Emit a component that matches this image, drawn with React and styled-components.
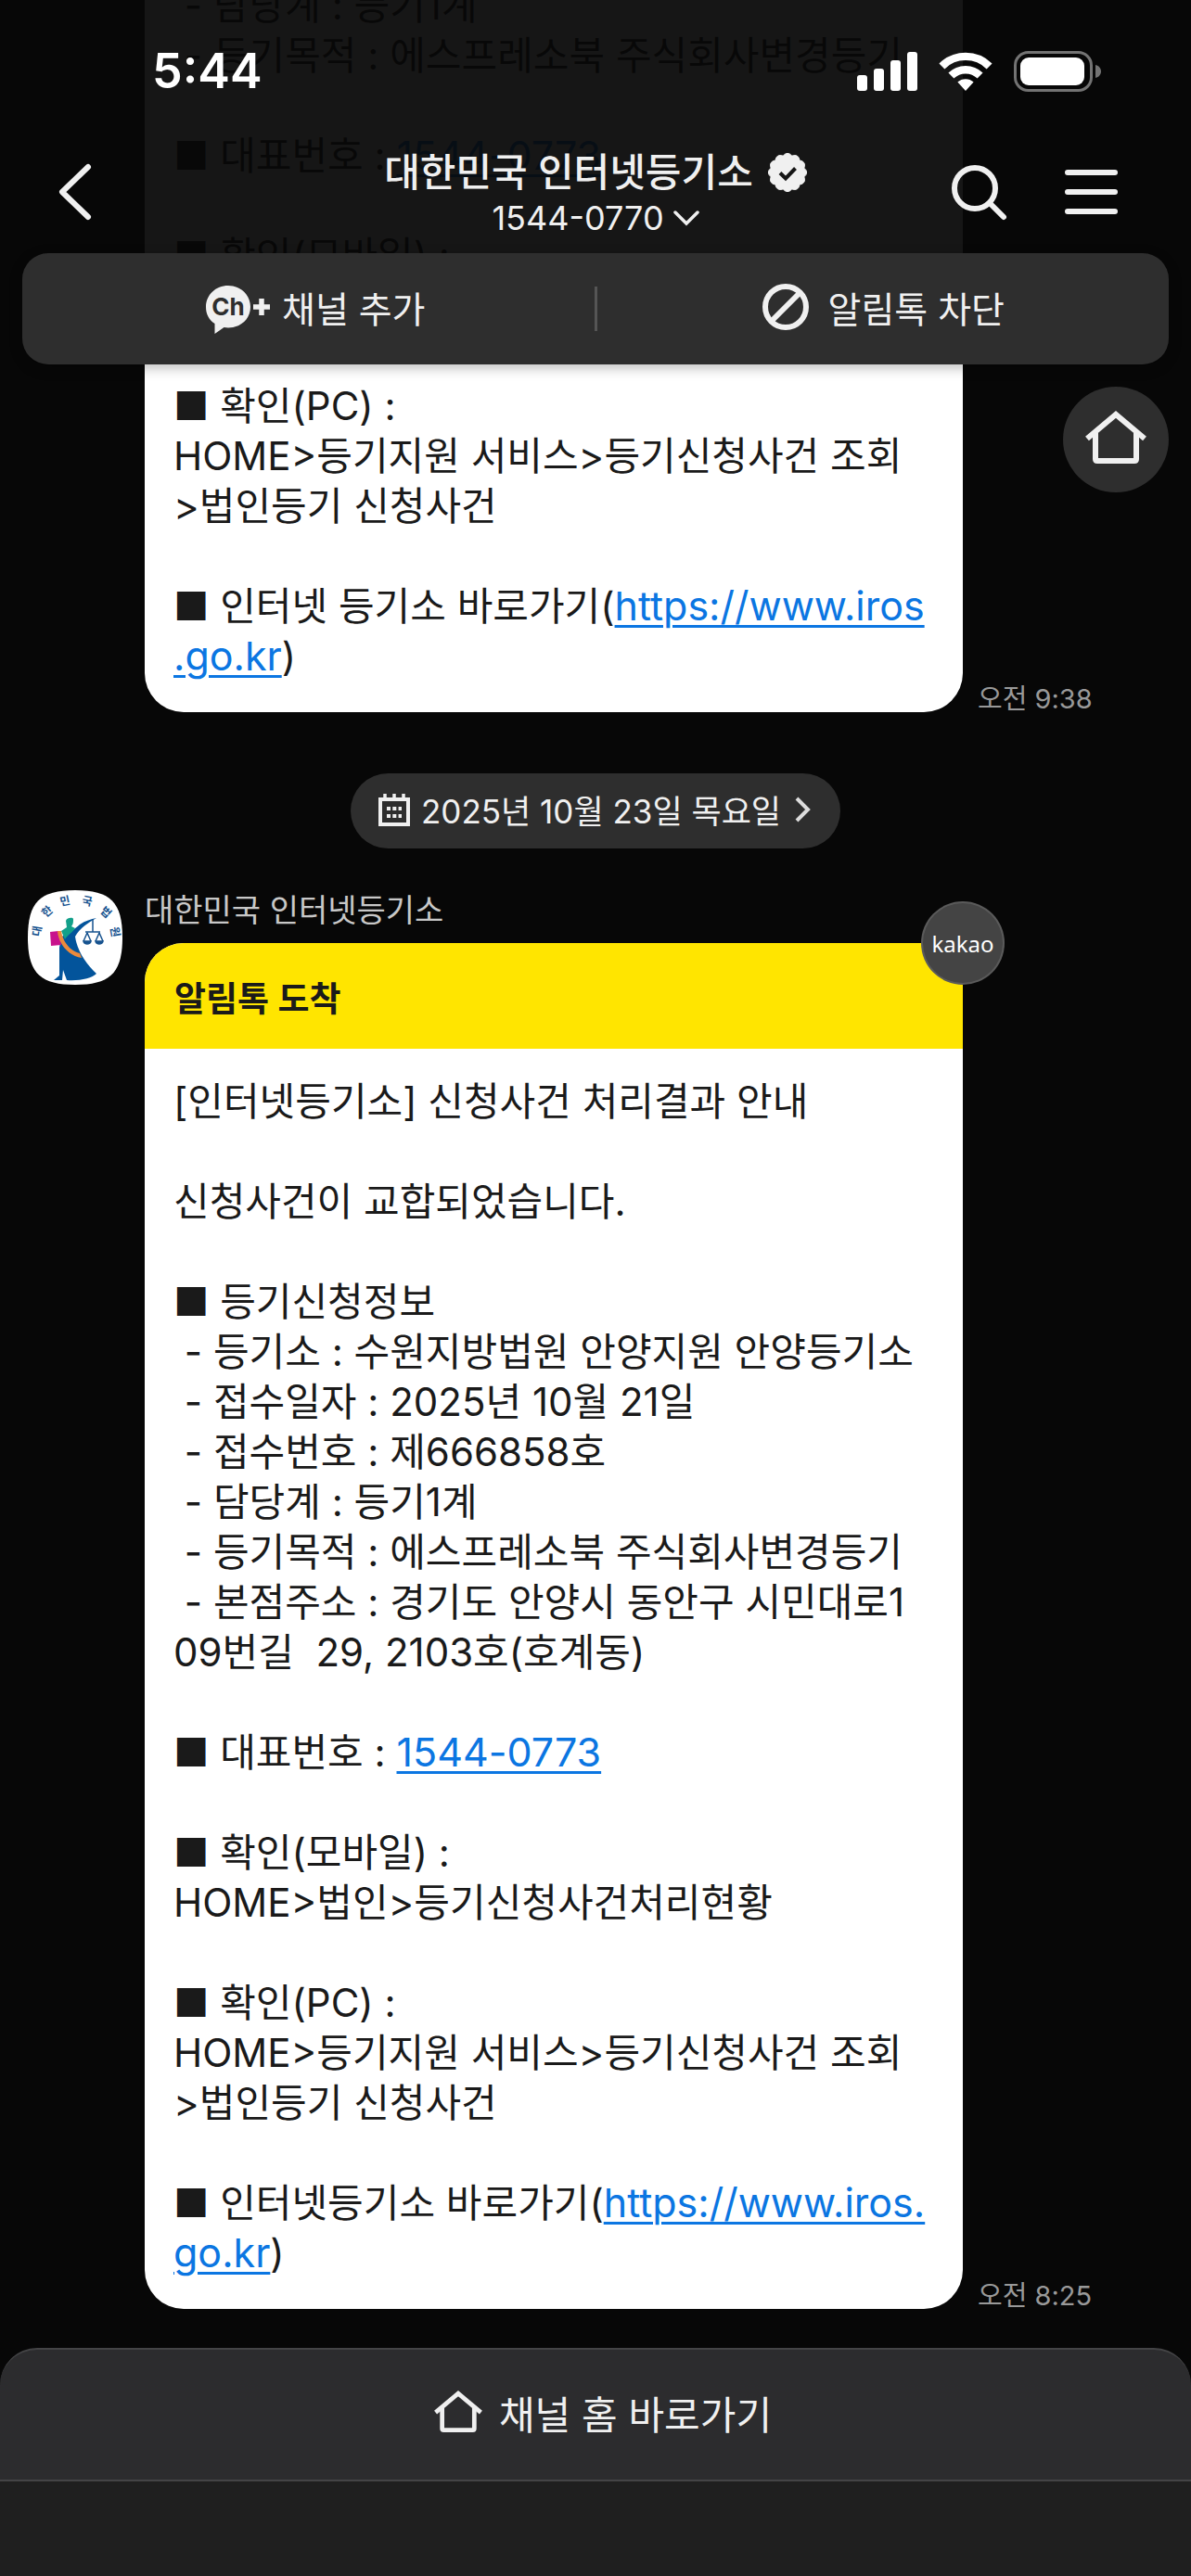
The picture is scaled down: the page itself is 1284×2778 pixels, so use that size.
import React from "react";
import styled, { createGlobalStyle } from "styled-components";

const color = {
  page: "#070707",
  panel: "#2e2e2e",
  footer: "#2c2c2e",
  line: "#444446",
  under: "#1f1f1f",
  light: "#f0f0f0",
  name: "#c8c8c8",
  muted: "#999999",
  ink: "#1a1a1a",
  link: "#0b76e2",
  yellow: "#ffe500",
};

const GlobalStyle = createGlobalStyle`
  *, *::before, *::after { box-sizing: border-box; }
  body {
    margin: 0;
    background: ${color.page};
    font-family: Inter, "Noto Sans CJK KR", sans-serif;
  }
  button {
    margin: 0;
    padding: 0;
    border: 0;
    background: none;
    color: inherit;
    font: inherit;
    cursor: pointer;
  }
  svg { display: block; flex: none; }
`;

const Screen = styled.div`
  position: relative;
  display: flex;
  flex-direction: column;
  height: 100vh;
  overflow: hidden;
  color: ${color.light};
`;

/* ---------- header ---------- */

const Header = styled.header`
  position: absolute;
  top: 0;
  left: 0;
  right: 0;
  z-index: 2;
`;

const TopBlock = styled.div`
  background: rgba(7, 7, 7, 0.94);
`;

const StatusBar = styled.div`
  display: flex;
  align-items: center;
  justify-content: space-between;
  padding: 48px 96px 36px 164px;
`;

const Clock = styled.time`
  font-size: 52px;
  line-height: 57px;
  font-weight: 600;
  color: #fff;
`;

const StatusIcons = styled.div`
  display: flex;
  align-items: center;
  gap: 23px;
`;

const NavBar = styled.nav`
  display: grid;
  grid-template-columns: 1fr auto 1fr;
  align-items: center;
  height: 132px;
  padding: 0 60px;
`;

const IconButton = styled.button`
  display: flex;
  justify-self: start;
`;

const NavActions = styled.div`
  display: flex;
  align-items: center;
  justify-content: flex-end;
  gap: 56px;
  padding-right: 16px;
`;

const TitleBlock = styled.div`
  display: flex;
  flex-direction: column;
  align-items: center;
  padding-top: 6px;
`;

const Title = styled.h1`
  display: flex;
  align-items: center;
  gap: 16px;
  margin: 0;
  font-size: 42px;
  line-height: 50px;
  font-weight: 500;
`;

const PhoneButton = styled.button`
  display: flex;
  align-items: center;
  gap: 10px;
  font-size: 36px;
  line-height: 48px;
`;

const ActionCard = styled.div`
  display: grid;
  grid-template-columns: 1fr 3px 1fr;
  align-items: center;
  height: 120px;
  margin: 0 24px;
  border-radius: 28px;
  background: ${color.panel};
  box-shadow: 0 4px 14px rgba(0, 0, 0, 0.25);
`;

const ActionButton = styled.button`
  display: flex;
  align-items: center;
  justify-content: center;
  gap: 12px;
  height: 100%;
  padding-bottom: 4px;
  font-size: 39px;
`;

const Divider = styled.span`
  height: 48px;
  background: #555;
`;

const FloatingHome = styled.button`
  position: absolute;
  right: 24px;
  bottom: -138px;
  display: flex;
  align-items: center;
  justify-content: center;
  width: 114px;
  height: 114px;
  padding-bottom: 4px;
  border-radius: 50%;
  background: ${color.panel};
`;

/* ---------- chat ---------- */

const Chat = styled.main`
  display: flex;
  flex: 1;
  flex-direction: column;
  justify-content: flex-end;
  min-height: 0;
  padding: 0 30px 42px;
  overflow: hidden;
`;

const MessageRow = styled.article`
  display: grid;
  flex: none;
  grid-template-columns: 102px minmax(0, 882px) auto;
  column-gap: 24px;
  justify-content: start;
`;

const MessageColumn = styled.div`
  grid-column: 2;
  display: flex;
  flex-direction: column;
`;

const Sender = styled.div`
  padding-bottom: 13px;
  font-size: 34px;
  line-height: 44px;
  color: ${color.name};
`;

const Bubble = styled.div`
  position: relative;
  border-radius: ${(p) => (p.$continued ? "0 0 42px 42px" : "42px")};
  background: #fff;
  color: ${color.ink};
`;

const BubbleHead = styled.h2`
  margin: 0;
  padding: 36px 32px 28px;
  border-radius: 42px 0 0 0;
  background: ${color.yellow};
  font-size: 37px;
  line-height: 50px;
  font-weight: 600;
`;

const KakaoBadge = styled.span`
  position: absolute;
  top: -45px;
  right: -45px;
  display: flex;
  align-items: center;
  justify-content: center;
  width: 90px;
  height: 90px;
  border: 2px solid rgba(255, 255, 255, 0.12);
  border-radius: 50%;
  background: #444;
  color: #fff;
  font-family: "Noto Sans", sans-serif;
  font-size: 24px;
`;

const BubbleBody = styled.div`
  padding: ${(p) => (p.$continued ? "0" : "30px")} 31px 33px;
  font-size: 42px;
  line-height: 54px;
`;

const Line = styled.p`
  height: 54px;
  margin: 0;
  white-space: pre;
`;

const LinkLines = styled.p`
  margin: 0;
  white-space: pre-wrap;
  word-break: break-all;
`;

const TextLink = styled.a`
  color: ${color.link};
  font-size: 43px;
  line-height: 1;
  text-decoration: underline;
  text-decoration-thickness: 3px;
  text-underline-offset: 5px;
`;

const SentAt = styled.time`
  align-self: end;
  margin-left: -8px;
  font-size: 29px;
  line-height: 28px;
  color: ${color.muted};
  white-space: nowrap;
`;

const DateButton = styled.button`
  display: flex;
  flex: none;
  align-items: center;
  align-self: center;
  gap: 12px;
  height: 81px;
  margin: 66px 0 45px;
  padding: 0 30px 4px;
  border-radius: 41px;
  background: ${color.panel};
  font-size: 35px;
`;

/* ---------- footer ---------- */

const Footer = styled.footer`
  display: flex;
  flex-direction: column;
  background: linear-gradient(transparent 60px, ${color.under} 60px);
`;

const ChannelHome = styled.button`
  display: flex;
  align-items: center;
  justify-content: center;
  gap: 18px;
  height: 144px;
  padding: 0 0 6px 16px;
  border: 2px solid ${color.line};
  border-width: 2px 0;
  border-radius: 40px 40px 0 0;
  background: ${color.footer};
  font-size: 42px;
`;

const SafeArea = styled.div`
  height: 102px;
`;

/* ---------- icons ---------- */

const Signal = () => (
  <svg width="65" height="42" fill="#fff" aria-hidden="true">
    <rect x="0" y="25" width="11" height="17" rx="3" />
    <rect x="18" y="18" width="11" height="24" rx="3" />
    <rect x="36" y="9" width="11" height="33" rx="3" />
    <rect x="54" y="0" width="11" height="42" rx="3" />
  </svg>
);

const Wifi = () => (
  <svg width="58" height="42" viewBox="0 0 58 42" aria-hidden="true">
    <g fill="none" stroke="#fff" strokeWidth="8.4">
      <path d="M3.4 15.4a36.4 36.4 0 0 1 51.2 0" />
      <path d="M13.4 25.6a22.2 22.2 0 0 1 31.2 0" />
    </g>
    <path d="M20.4 32.6a12.4 12.4 0 0 1 17.2 0L29 42z" fill="#fff" />
  </svg>
);

const Battery = () => (
  <svg width="95" height="44" viewBox="0 0 95 44" aria-hidden="true">
    <rect x="1.5" y="1.5" width="82" height="41" rx="14" fill="none" stroke="#737373" strokeWidth="3" />
    <rect x="7" y="7" width="69" height="30" rx="9" fill="#fff" />
    <path d="M88 15c4 1 6 4 6 7s-2 6-6 7z" fill="#737373" />
  </svg>
);

const Back = () => (
  <svg width="42" height="68" viewBox="0 0 42 68" fill="none" stroke={color.light} strokeWidth="6" strokeLinecap="round" strokeLinejoin="round" aria-hidden="true">
    <path d="M35 7 7 34l28 27" />
  </svg>
);

const Search = () => (
  <svg width="64" height="64" viewBox="0 0 64 64" fill="none" stroke={color.light} strokeWidth="6" strokeLinecap="round" aria-hidden="true">
    <circle cx="27" cy="28" r="22" />
    <path d="m43 44 15 15" />
  </svg>
);

const Menu = () => (
  <svg width="64" height="64" viewBox="0 0 64 64" stroke={color.light} strokeWidth="6" strokeLinecap="round" aria-hidden="true">
    <path d="M7 11h51M7 32h51M7 53h51" />
  </svg>
);

const scallop = Array.from({ length: 12 }, (_, i) => {
  const at = (r, step) => {
    const a = ((i + step) * Math.PI) / 6 - Math.PI / 2;
    return `${(21 + r * Math.cos(a)).toFixed(1)} ${(21 + r * Math.sin(a)).toFixed(1)}`;
  };
  return `${i ? "" : `M${at(18.5, -0.5)}`}Q${at(23.4, 0)} ${at(18.5, 0.5)}`;
}).join("");

const Verified = () => (
  <svg width="42" height="42" viewBox="0 0 42 42" aria-label="인증됨">
    <path d={`${scallop}Z`} fill={color.light} stroke={color.light} strokeLinejoin="round" />
    <path d="m13 21.500 6 6 10.500-11" fill="none" stroke="#161616" strokeWidth="4" />
  </svg>
);

const ChevronDown = () => (
  <svg width="28" height="18" viewBox="0 0 28 18" fill="none" stroke={color.light} strokeWidth="3.500" strokeLinecap="round" aria-hidden="true">
    <path d="m2 3 12 12L26 3" />
  </svg>
);

const ChevronRight = () => (
  <svg width="22" height="30" viewBox="0 0 22 30" fill="none" stroke="#ddd" strokeWidth="4" aria-hidden="true">
    <path d="m5 3 12 12L5 27" />
  </svg>
);

const ChannelAdd = () => (
  <svg width="86" height="60" viewBox="0 0 86 60" aria-hidden="true">
    <path d="M40 7C26.500 7 16 17 16 30c0 8 3.500 14 9.500 18v11l10-7c1.500.3 3 .4 4.500.4C53.500 52.400 64 43 64 30S53.500 7 40 7z" fill={color.light} />
    <path d="M67 30h18M76 21v18" stroke={color.light} strokeWidth="5.500" />
    <text x="40" y="39" textAnchor="middle" fontSize="26" fontWeight="700" fill={color.panel}>Ch</text>
  </svg>
);

const Block = () => (
  <svg width="60" height="52" viewBox="0 0 60 52" fill="none" stroke={color.light} strokeWidth="6" aria-hidden="true">
    <circle cx="26" cy="26" r="22" />
    <path d="m11 41 30-30" />
  </svg>
);

const House = ({ width }) => (
  <svg width={width} viewBox="0 0 66 58" fill="none" stroke={color.light} strokeWidth="6" aria-hidden="true">
    <path d="M2 30 33 4l31 26" />
    <path d="M11 24v28q0 2 2 2h40q2 0 2-2V24" />
  </svg>
);

const Calendar = () => (
  <svg width="34" height="36" viewBox="0 0 34 36" aria-hidden="true">
    <path d="M2 7h30v27H2z" fill="none" stroke={color.light} strokeWidth="4" />
    <path d="M7 1v6M17 1v6M27 1v6" stroke={color.light} strokeWidth="3.500" />
    <path d="M9 17h16M9 25h16" stroke={color.light} strokeWidth="4" strokeDasharray="4 2.300" />
  </svg>
);

const emblemLetters = [
  ["대", 10, 44, -80],
  ["한", 21, 23, -42],
  ["민", 40, 12, -12],
  ["국", 64, 12, 12],
  ["법", 84, 24, 42],
  ["원", 94, 45, 80],
];

const Emblem = () => (
  <svg width="102" height="102" viewBox="0 0 102 102" role="img" aria-label="대한민국 법원">
    <path d="M51 0c38 0 51 13 51 51s-13 51-51 51S0 89 0 51 13 0 51 0z" fill="#fff" />
    <g fill="#17538f" fontSize="12" fontWeight="700" textAnchor="middle">
      {emblemLetters.map(([letter, x, y, turn]) => (
        <text key={letter} transform={`translate(${x} ${y}) rotate(${turn})`} y="4">
          {letter}
        </text>
      ))}
    </g>
    <path d="M36 50c8-2 14-8 20-13 6-4 12-6 18-7-9 5-18 11-23 20 2 15 12 30 23 40-5 5-18 8-32 7l-4-11-1 11h-9l6-5V62z" fill="#03549b" />
    <path d="M41 33c1-4 8-4 8-2 0 3 0 6-2 8l4 2c-3 5-8 7-11 12l-4-9 6-4z" fill="#12a08a" />
    <path d="m24 45 9-1 3 15-11 1z" fill="#c8128c" />
    <path d="M32 44h4c2 12 9 21 20 24l2 5C44 71 33 58 32 44z" fill="#ec8a3c" />
    <g fill="none" stroke="#17538f" strokeWidth="1.500">
      <path d="M70 31v14M62 45h16M64 46l-4 9M64 46l4 9M77 46l-4 9M77 46l4 9" />
      <path d="M60 55h8c-1 4-7 4-8 0zM73 55h8c-1 4-7 4-8 0z" fill="#17538f" />
    </g>
  </svg>
);

/* ---------- messages ---------- */

const Contact = () => (
  <>
    <Line>
      ■ 대표번호 : <TextLink href="tel:1544-0773">1544-0773</TextLink>
    </Line>
    <Line />
    <Line>■ 확인(모바일) :</Line>
    <Line>{"HOME>법인>등기신청사건처리현황"}</Line>
    <Line />
    <Line>■ 확인(PC) :</Line>
    <Line>{"HOME>등기지원 서비스>등기신청사건 조회"}</Line>
    <Line>{">법인등기 신청사건"}</Line>
    <Line />
  </>
);

const Shortcut = ({ label, url }) => (
  <LinkLines>
    {`■ ${label} 바로가기(`}
    <TextLink href="https://www.iros.go.kr">{url}</TextLink>)
  </LinkLines>
);

const applicationLines = [
  "[인터넷등기소] 신청사건 처리결과 안내",
  "",
  "신청사건이 교합되었습니다.",
  "",
  "■ 등기신청정보",
  " - 등기소 : 수원지방법원 안양지원 안양등기소",
  " - 접수일자 : 2025년 10월 21일",
  " - 접수번호 : 제666858호",
  " - 담당계 : 등기1계",
  " - 등기목적 : 에스프레소북 주식회사변경등기",
  " - 본점주소 : 경기도 안양시 동안구 시민대로1",
  "09번길  29, 2103호(호계동)",
  "",
];

const earlierLines = [
  " - 담당계 : 등기1계",
  " - 등기목적 : 에스프레소북 주식회사변경등기",
  "",
];

const Lines = ({ items }) => items.map((text, i) => <Line key={i}>{text}</Line>);

export default function App() {
  return (
    <Screen>
      <GlobalStyle />
      <Header>
        <TopBlock>
          <StatusBar>
            <Clock>5:44</Clock>
            <StatusIcons>
              <Signal />
              <Wifi />
              <Battery />
            </StatusIcons>
          </StatusBar>
          <NavBar>
            <IconButton aria-label="뒤로">
              <Back />
            </IconButton>
            <TitleBlock>
              <Title>
                대한민국 인터넷등기소
                <Verified />
              </Title>
              <PhoneButton>
                1544-0770
                <ChevronDown />
              </PhoneButton>
            </TitleBlock>
            <NavActions>
              <IconButton aria-label="검색">
                <Search />
              </IconButton>
              <IconButton aria-label="메뉴">
                <Menu />
              </IconButton>
            </NavActions>
          </NavBar>
        </TopBlock>
        <ActionCard>
          <ActionButton>
            <ChannelAdd />
            채널 추가
          </ActionButton>
          <Divider />
          <ActionButton>
            <Block />
            알림톡 차단
          </ActionButton>
        </ActionCard>
        <FloatingHome aria-label="채널 홈">
          <House width="66" />
        </FloatingHome>
      </Header>

      <Chat>
        <MessageRow>
          <MessageColumn>
            <Bubble $continued>
              <BubbleBody $continued>
                <Lines items={earlierLines} />
                <Contact />
                <Shortcut label="인터넷 등기소" url={"https://www.iros\n.go.kr"} />
              </BubbleBody>
            </Bubble>
          </MessageColumn>
          <SentAt>오전 9:38</SentAt>
        </MessageRow>

        <DateButton>
          <Calendar />
          2025년 10월 23일 목요일
          <ChevronRight />
        </DateButton>

        <MessageRow>
          <Emblem />
          <MessageColumn>
            <Sender>대한민국 인터넷등기소</Sender>
            <Bubble>
              <BubbleHead>알림톡 도착</BubbleHead>
              <KakaoBadge>kakao</KakaoBadge>
              <BubbleBody>
                <Lines items={applicationLines} />
                <Contact />
                <Shortcut label="인터넷등기소" url={"https://www.iros.\ngo.kr"} />
              </BubbleBody>
            </Bubble>
          </MessageColumn>
          <SentAt>오전 8:25</SentAt>
        </MessageRow>
      </Chat>

      <Footer>
        <ChannelHome>
          <House width="52" />
          채널 홈 바로가기
        </ChannelHome>
        <SafeArea />
      </Footer>
    </Screen>
  );
}
